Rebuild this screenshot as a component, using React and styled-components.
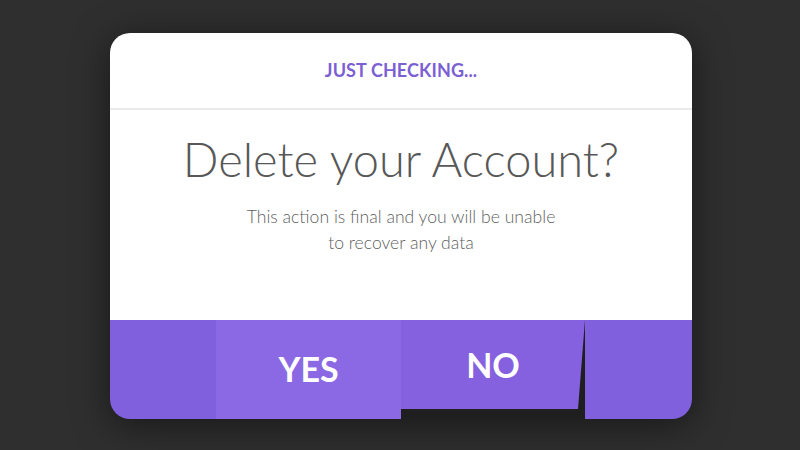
import React from 'react'
import styled, { createGlobalStyle } from 'styled-components'

const GlobalStyle = createGlobalStyle`
  html, body {
    margin: 0;
    padding: 0;
    background: #2f2f2f;
  }
  body {
    font-family: Lato, "Noto Sans", sans-serif;
  }
`

const Page = styled.div`
  width: 800px;
  height: 450px;
  display: flex;
  justify-content: center;
  padding: 33px 0 0 2px;
  box-sizing: border-box;
`

const Card = styled.div`
  width: 582px;
  height: 386px;
  border-radius: 20px;
  overflow: hidden;
  display: flex;
  flex-direction: column;
  background: #222;
  box-shadow: 0 6px 36px rgba(0, 0, 0, 0.5);
`

const Header = styled.div`
  height: 77px;
  background: #fff;
  border-bottom: 2px solid #eaeaee;
  display: flex;
  align-items: center;
  justify-content: center;
  padding-bottom: 2px;
  box-sizing: border-box;
  font-weight: 700;
  font-size: 18px;
  color: #7b60d4;
  letter-spacing: 0.1px;
`

const Body = styled.div`
  height: 210px;
  background: #fff;
  text-align: center;
  padding-top: 21px;
  box-sizing: border-box;
`

const Title = styled.h1`
  margin: 0;
  font-weight: 300;
  font-size: 47px;
  line-height: 56px;
  color: #585858;
`

const Note = styled.p`
  margin: 17px 0 0;
  font-weight: 300;
  font-size: 17.6px;
  line-height: 26px;
  color: #5f5f5f;
`

const Footer = styled.div`
  flex: 1;
  display: flex;
  align-items: flex-start;
  background: #1f1f1f;
`

const Side = styled.div`
  width: ${p => p.w}px;
  align-self: stretch;
  background: #8060dc;
`

const Choice = styled.button`
  width: ${p => p.w}px;
  height: ${p => (p.short ? '89px' : '100%')};
  border: 0;
  margin: 0;
  padding: 0 0 ${p => (p.short ? '0' : '2px')};
  background: ${p => (p.short ? '#8661df' : '#8b69e4')};
  color: #fff;
  font-family: Lato, "Noto Sans", sans-serif;
  font-weight: 700;
  font-size: 34px;
  cursor: pointer;
  clip-path: ${p => (p.short ? 'polygon(0 0, 100% 0, calc(100% - 7px) 100%, 0 100%)' : 'none')};
`

export default function App() {
  return (
    <>
      <GlobalStyle />
      <Page>
        <Card>
          <Header>JUST CHECKING...</Header>
          <Body>
            <Title>Delete your Account?</Title>
            <Note>
              This action is final and you will be unable
              <br />
              to recover any data
            </Note>
          </Body>
          <Footer>
            <Side w={106} />
            <Choice w={185}>YES</Choice>
            <Choice w={184} short>NO</Choice>
            <Side w={107} />
          </Footer>
        </Card>
      </Page>
    </>
  )
}
